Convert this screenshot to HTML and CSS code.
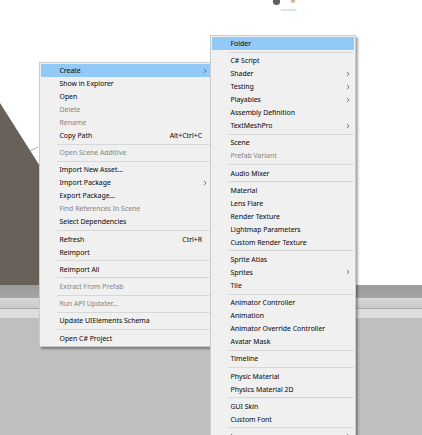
FILE: index.html
```html
<!DOCTYPE html>
<html>
<head>
<meta charset="utf-8">
<link rel="stylesheet" href="styles.css">
</head>
<body>
<div class="screen">
  <div class="scene">
    <svg class="scene-art" width="422" height="285" viewBox="0 0 422 285">
      <polygon points="0,103 100,261 100,285 0,285" fill="#67615a"/>
      <line x1="0" y1="166" x2="38" y2="147" stroke="#726c65" stroke-width="0.6"/>
      <circle cx="276.5" cy="1.5" r="3.6" fill="#5b6069"/>
      <circle cx="293" cy="0.8" r="2.2" fill="#cbb994"/>
      <line x1="281" y1="10" x2="296" y2="10" stroke="#c2def2" stroke-width="1.3" stroke-linecap="round"/>
    </svg>
  </div>
  <div class="band band-dark"></div>
  <div class="band band-hl"></div>
  <div class="band band-mid"></div>
  <div class="band band-line"></div>
  <div class="band band-light"></div>
  <div class="band band-floor"></div>

  <div class="menu menu-main">
    <div class="item active"><span class="label">Create</span><svg class="chev" viewBox="0 0 4 6" width="4" height="6"><path d="M1 0.8 L3 3 L1 5.2"/></svg></div>
    <div class="item"><span class="label">Show in Explorer</span></div>
    <div class="item"><span class="label">Open</span></div>
    <div class="item disabled"><span class="label">Delete</span></div>
    <div class="item disabled"><span class="label">Rename</span></div>
    <div class="item"><span class="label">Copy Path</span><span class="key">Alt+Ctrl+C</span></div>
    <div class="sep"></div>
    <div class="item disabled"><span class="label">Open Scene Additive</span></div>
    <div class="sep"></div>
    <div class="item"><span class="label">Import New Asset...</span></div>
    <div class="item"><span class="label">Import Package</span><svg class="chev" viewBox="0 0 4 6" width="4" height="6"><path d="M1 0.8 L3 3 L1 5.2"/></svg></div>
    <div class="item"><span class="label">Export Package...</span></div>
    <div class="item disabled"><span class="label">Find References In Scene</span></div>
    <div class="item"><span class="label">Select Dependencies</span></div>
    <div class="sep"></div>
    <div class="item"><span class="label">Refresh</span><span class="key">Ctrl+R</span></div>
    <div class="item"><span class="label">Reimport</span></div>
    <div class="sep"></div>
    <div class="item"><span class="label">Reimport All</span></div>
    <div class="sep"></div>
    <div class="item disabled"><span class="label">Extract From Prefab</span></div>
    <div class="sep"></div>
    <div class="item disabled"><span class="label">Run API Updater...</span></div>
    <div class="sep"></div>
    <div class="item"><span class="label">Update UIElements Schema</span></div>
    <div class="sep"></div>
    <div class="item"><span class="label">Open C# Project</span></div>
  </div>

  <div class="menu menu-sub">
    <div class="item active"><span class="label">Folder</span></div>
    <div class="sep"></div>
    <div class="item"><span class="label">C# Script</span></div>
    <div class="item"><span class="label">Shader</span><svg class="chev" viewBox="0 0 4 6" width="4" height="6"><path d="M1 0.8 L3 3 L1 5.2"/></svg></div>
    <div class="item"><span class="label">Testing</span><svg class="chev" viewBox="0 0 4 6" width="4" height="6"><path d="M1 0.8 L3 3 L1 5.2"/></svg></div>
    <div class="item"><span class="label">Playables</span><svg class="chev" viewBox="0 0 4 6" width="4" height="6"><path d="M1 0.8 L3 3 L1 5.2"/></svg></div>
    <div class="item"><span class="label">Assembly Definition</span></div>
    <div class="item"><span class="label">TextMeshPro</span><svg class="chev" viewBox="0 0 4 6" width="4" height="6"><path d="M1 0.8 L3 3 L1 5.2"/></svg></div>
    <div class="sep"></div>
    <div class="item"><span class="label">Scene</span></div>
    <div class="item disabled"><span class="label">Prefab Variant</span></div>
    <div class="sep"></div>
    <div class="item"><span class="label">Audio Mixer</span></div>
    <div class="sep"></div>
    <div class="item"><span class="label">Material</span></div>
    <div class="item"><span class="label">Lens Flare</span></div>
    <div class="item"><span class="label">Render Texture</span></div>
    <div class="item"><span class="label">Lightmap Parameters</span></div>
    <div class="item"><span class="label">Custom Render Texture</span></div>
    <div class="sep"></div>
    <div class="item"><span class="label">Sprite Atlas</span></div>
    <div class="item"><span class="label">Sprites</span><svg class="chev" viewBox="0 0 4 6" width="4" height="6"><path d="M1 0.8 L3 3 L1 5.2"/></svg></div>
    <div class="item"><span class="label">Tile</span></div>
    <div class="sep"></div>
    <div class="item"><span class="label">Animator Controller</span></div>
    <div class="item"><span class="label">Animation</span></div>
    <div class="item"><span class="label">Animator Override Controller</span></div>
    <div class="item"><span class="label">Avatar Mask</span></div>
    <div class="sep"></div>
    <div class="item"><span class="label">Timeline</span></div>
    <div class="sep"></div>
    <div class="item"><span class="label">Physic Material</span></div>
    <div class="item"><span class="label">Physics Material 2D</span></div>
    <div class="sep"></div>
    <div class="item"><span class="label">GUI Skin</span></div>
    <div class="item"><span class="label">Custom Font</span></div>
    <div class="sep"></div>
    <div class="item"><span class="label">Legacy</span><svg class="chev" viewBox="0 0 4 6" width="4" height="6"><path d="M1 0.8 L3 3 L1 5.2"/></svg></div>
  </div>
</div>
</body>
</html>
```

FILE: styles.css
```css
html, body {
  margin: 0;
  padding: 0;
}
body {
  width: 422px;
  height: 435px;
  overflow: hidden;
  background: #ffffff;
  font-family: "Noto Sans", "Noto Sans CJK KR", sans-serif;
}
.screen {
  position: relative;
  width: 422px;
  height: 435px;
  overflow: hidden;
  display: flex;
  flex-direction: column;
}
.scene {
  height: 285px;
  flex: none;
}
.scene-art {
  display: block;
}
.band { flex: none; }
.band-dark {
  height: 13px;
  background: linear-gradient(#9b9b9b, #a5a5a5);
}
.band-hl {
  height: 1px;
  background: #dadada;
}
.band-mid {
  height: 9px;
  background: linear-gradient(#d5d5d5, #cbcbcb);
}
.band-line {
  height: 1px;
  background: #a9a9a9;
}
.band-light {
  height: 9px;
  background: #dedede;
}
.band-floor {
  flex: 1;
  background: #bfbfbf;
}

.menu {
  position: absolute;
  background: #f0f0f0;
  border: 1px solid #cbcbcb;
  box-shadow: 2px 2px 2px rgba(0, 0, 0, 0.35);
  padding: 1px;
  font-size: 6.9px;
  color: #111;
  -webkit-text-stroke: 0.05px currentColor;
}
.menu-main {
  left: 39px;
  top: 62px;
  width: 170px;
}
.menu-sub {
  left: 210px;
  top: 35px;
  width: 142px;
}
.item {
  display: flex;
  align-items: center;
  height: 13px;
  padding: 0 4px 0 18.5px;
  white-space: nowrap;
}
.item .label {
  flex: 1;
}
.item.active {
  background: #91c9f7;
}
.item.disabled {
  color: #8a8a8a;
}
.key {
  margin-right: 5px;
}
.chev {
  display: block;
  margin-left: 1px;
}
.chev path {
  fill: none;
  stroke: #5a5a5a;
  stroke-width: 0.8;
}
.sep {
  height: 1px;
  background: #d7d7d7;
  margin: 1.6px 0 1.6px 16px;
}
```
